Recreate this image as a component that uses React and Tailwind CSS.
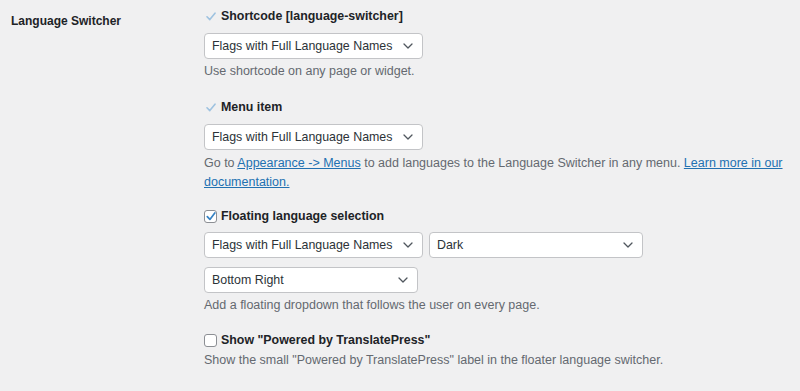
import React from 'react';

const Chevron = () => (
  <svg width="10" height="6" viewBox="0 0 10 6" className="shrink-0">
    <path d="M1 1l4 4 4-4" fill="none" stroke="#50575e" strokeWidth="1.3" strokeLinecap="round" strokeLinejoin="round" />
  </svg>
);

const Select = ({ value, width }) => (
  <div className={`${width} h-[26px] bg-white border border-[#c3c4c7] rounded-[4px] flex items-center justify-between pl-[7px] pr-[9px] text-[12.4px] text-[#2c3338]`}>
    <span>{value}</span>
    <Chevron />
  </div>
);

const Tick = () => (
  <span className="w-[13px] h-[20px] flex items-center justify-center mr-[4px]">
    <svg width="10" height="9" viewBox="0 0 10 9">
      <path d="M1 4.8l2.8 2.8L9 1.2" fill="none" stroke="#9ec2e0" strokeWidth="1.6" strokeLinecap="round" strokeLinejoin="round" />
    </svg>
  </span>
);

const Box = ({ checked }) => (
  <span className="w-[13px] h-[13px] bg-white border border-[#8c8f94] rounded-[3px] flex items-center justify-center mr-[4px]">
    {checked && (
      <svg width="10" height="9" viewBox="0 0 10 9">
        <path d="M1.3 4.6l2.6 2.8L8.8 1" fill="none" stroke="#3582c4" strokeWidth="1.7" strokeLinecap="round" strokeLinejoin="round" />
      </svg>
    )}
  </span>
);

const Option = ({ children, control }) => (
  <div className="h-[20px] flex items-center text-[12.4px] font-bold text-[#1d2327]">
    {control}
    <span>{children}</span>
  </div>
);

const Desc = ({ children, className = '' }) => (
  <p className={`text-[12.5px] leading-[19px] text-[#646970] ${className}`}>{children}</p>
);

export default function App() {
  return (
    <div className="w-[800px] h-[391px] bg-[#f0f0f1] flex font-['Liberation_Sans',Arial,sans-serif] overflow-hidden">
      <div className="w-[204px] pl-[11px] pt-[12px] shrink-0">
        <div className="text-[12px] leading-[19px] font-bold text-[#1d2327]">Language Switcher</div>
      </div>
      <div className="pt-[6px] w-[590px]">
        <Option control={<Tick />}>Shortcode [language-switcher]</Option>
        <div className="mt-[7px]">
          <Select value="Flags with Full Language Names" width="w-[219px]" />
        </div>
        <Desc className="mt-[3px]">Use shortcode on any page or widget.</Desc>

        <div className="mt-[16px]">
          <Option control={<Tick />}>Menu item</Option>
        </div>
        <div className="mt-[7px]">
          <Select value="Flags with Full Language Names" width="w-[219px]" />
        </div>
        <Desc className="mt-[4px]">
          Go to <a className="text-[#2271b1] underline">Appearance -&gt; Menus</a> to add languages to the Language Switcher in any menu.{' '}
          <a className="text-[#2271b1] underline">Learn more in our documentation.</a>
        </Desc>

        <div className="mt-[14px]">
          <Option control={<Box checked />}>Floating language selection</Option>
        </div>
        <div className="mt-[6px] flex gap-[6px]">
          <Select value="Flags with Full Language Names" width="w-[219px]" />
          <Select value="Dark" width="w-[214px]" />
        </div>
        <div className="mt-[9px]">
          <Select value="Bottom Right" width="w-[214px]" />
        </div>
        <Desc className="mt-[3px]">Add a floating dropdown that follows the user on every page.</Desc>

        <div className="mt-[15px]">
          <Option control={<Box />}>Show "Powered by TranslatePress"</Option>
        </div>
        <Desc className="mt-[1px]">Show the small "Powered by TranslatePress" label in the floater language switcher.</Desc>
      </div>
    </div>
  );
}
